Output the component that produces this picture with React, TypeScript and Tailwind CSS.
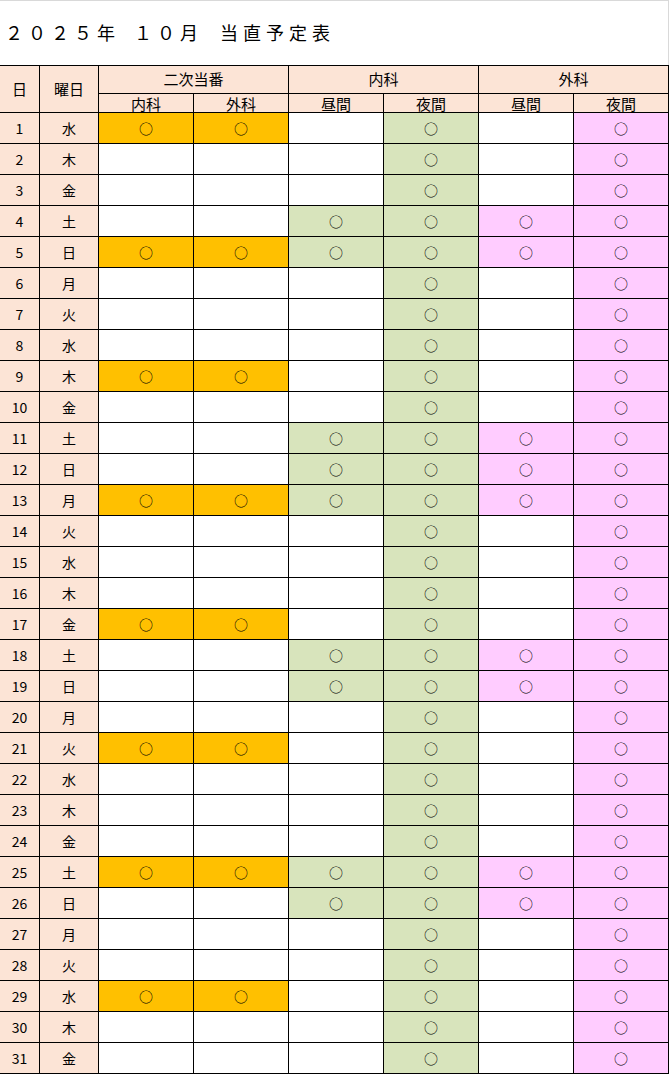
const WEEK = ["水", "木", "金", "土", "日", "月", "火"];
const NIJI = [1, 5, 9, 13, 17, 21, 25, 29];
const HOLIDAY = [4, 5, 11, 12, 13, 18, 19, 25, 26];

const days = Array.from({ length: 31 }, (_, i) => {
  const d = i + 1;
  return {
    day: d,
    youbi: WEEK[i % 7],
    niji: NIJI.includes(d),
    hiru: HOLIDAY.includes(d),
  };
});

const font = "font-['Noto_Sans_CJK_JP','Noto_Sans',sans-serif]";

function Cell({ bg, mark }: { bg: string; mark?: boolean }) {
  return (
    <div className={`${bg} flex items-center justify-center text-[14px] text-black`}>
      {mark ? "○" : ""}
    </div>
  );
}

export default function App() {
  return (
    <div className={`w-[669px] h-[1074px] bg-white ${font}`}>
      <div className="h-[65px] border-t border-r border-[#d9d9d9] flex items-center pl-[5px] pb-[2px]">
        <h1 className="text-[18px] tracking-[5px] text-black leading-none font-normal">
          ２０２５年<span className="ml-[14px]">１０月</span>
          <span className="ml-[17px]">当直予定表</span>
        </h1>
      </div>

      <div className="grid grid-cols-[39px_58px_94px_94px_94px_94px_94px_94px] grid-rows-[27px_18px_repeat(31,30px)] gap-px bg-black pt-px pb-px pr-px">
        <div className="row-span-2 bg-[#fce4d6] flex items-center justify-center text-[15px]">日</div>
        <div className="row-span-2 bg-[#fce4d6] flex items-center justify-center text-[15px]">曜日</div>
        <div className="col-span-2 bg-[#fce4d6] flex items-center justify-center text-[15px]">二次当番</div>
        <div className="col-span-2 bg-[#fce4d6] flex items-center justify-center text-[15px]">内科</div>
        <div className="col-span-2 bg-[#fce4d6] flex items-center justify-center text-[15px]">外科</div>
        {["内科", "外科", "昼間", "夜間", "昼間", "夜間"].map((t, i) => (
          <div key={i} className="bg-[#fce4d6] text-center text-[15px] leading-none pt-[2px]">
            {t}
          </div>
        ))}

        {days.map((r) => (
          <div key={r.day} className="contents">
            <div className="bg-[#fce4d6] flex items-center justify-center text-[14px]">{r.day}</div>
            <div className="bg-[#fce4d6] flex items-center justify-center text-[14px]">{r.youbi}</div>
            <Cell bg={r.niji ? "bg-[#ffc000]" : "bg-white"} mark={r.niji} />
            <Cell bg={r.niji ? "bg-[#ffc000]" : "bg-white"} mark={r.niji} />
            <Cell bg={r.hiru ? "bg-[#d8e4bc]" : "bg-white"} mark={r.hiru} />
            <Cell bg="bg-[#d8e4bc]" mark />
            <Cell bg={r.hiru ? "bg-[#ffccff]" : "bg-white"} mark={r.hiru} />
            <Cell bg="bg-[#ffccff]" mark />
          </div>
        ))}
      </div>
    </div>
  );
}
